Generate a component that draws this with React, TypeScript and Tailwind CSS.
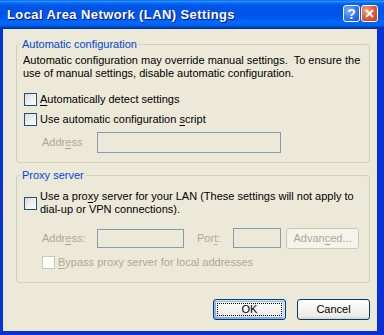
import React from "react";

const font = { fontFamily: '"Liberation Sans", Arial, sans-serif' };

function Check({ disabled = false }: { disabled?: boolean }) {
  return (
    <div
      className={
        disabled
          ? "w-[13px] h-[13px] shrink-0 border border-[#cac8bb] bg-white"
          : "w-[13px] h-[13px] shrink-0 border border-[#1c5180] bg-[linear-gradient(135deg,#dcdcd7_0%,#ffffff_100%)]"
      }
    />
  );
}

function U({ children }: { children: React.ReactNode }) {
  return <span className="underline underline-offset-[2px]">{children}</span>;
}

export default function App() {
  return (
    <div
      className="w-[384px] h-[335px] flex flex-col bg-[#0831d9] text-[11px] leading-[13px] text-black overflow-hidden"
      style={font}
    >
      {/* Title bar */}
      <div className="h-[29px] shrink-0 flex items-center pl-[7px] pr-[6px] bg-[linear-gradient(180deg,#0058ee_0%,#3593ff_4%,#288eff_6%,#127dff_8%,#036ffc_10%,#0262ee_14%,#0057e5_20%,#0054e3_24%,#0055eb_56%,#005bf5_66%,#026afe_76%,#0062ef_86%,#0052d6_92%,#0040ab_94%,#003092_100%)]">
        <div className="flex-1 text-white font-bold text-[13px] leading-[16px] [text-shadow:1px_1px_#0f1089] tracking-[0.4px]">
          Local Area Network (LAN) Settings
        </div>
        <div className="flex gap-[1px] mt-[-2px]">
          <div className="w-[17px] h-[17px] rounded-[3px] border border-white bg-[radial-gradient(circle_at_30%_30%,#7fb1ff_0%,#3a7df4_45%,#1651d6_100%)] flex items-center justify-center text-white font-bold text-[14px] leading-none">
            ?
          </div>
          <div className="w-[17px] h-[17px] rounded-[3px] border border-white bg-[radial-gradient(circle_at_30%_30%,#f5a98a_0%,#e2603a_45%,#c23c12_100%)] flex items-center justify-center">
            <svg width="9" height="9" viewBox="0 0 9 9">
              <path d="M1 1 L8 8 M8 1 L1 8" stroke="white" strokeWidth="2" />
            </svg>
          </div>
        </div>
      </div>

      {/* Client area */}
      <div className="flex-1 ml-[3px] mr-[7px] mb-[4px] bg-[#ece9d8] flex flex-col">
        {/* Group 1 */}
        <div className="relative ml-[13px] mt-[15px] w-[354px] border border-[#d0d0bf] rounded-[3px] pl-[6px] pt-[9px] pb-[9px]">
          <div className="absolute left-[3px] top-[-7px] px-[2px] bg-[#ece9d8] text-[#0046d5]">
            Automatic configuration
          </div>
          <div>
            Automatic configuration may override manual settings.&nbsp; To ensure the
            <br />
            use of manual settings, disable automatic configuration.
          </div>
          <div className="mt-[13px] flex items-center h-[13px] gap-[3px] pl-[1px]">
            <Check />
            <span>
              <U>A</U>utomatically detect settings
            </span>
          </div>
          <div className="mt-[7px] flex items-center h-[13px] gap-[3px] pl-[1px]">
            <Check />
            <span>
              Use automatic configuration <U>s</U>cript
            </span>
          </div>
          <div className="mt-[6px] flex items-center h-[21px]">
            <span className="w-[74px] shrink-0 pl-[19px] text-[#aca899]">
              Addr<U>e</U>ss
            </span>
            <div className="w-[184px] h-[21px] border border-[#7f9db9] bg-[#ece9d8]" />
          </div>
        </div>

        {/* Group 2 */}
        <div className="relative ml-[13px] mt-[12px] w-[354px] border border-[#d0d0bf] rounded-[3px] pl-[6px] pt-[14px] pb-[13px]">
          <div className="absolute left-[3px] top-[-7px] px-[2px] bg-[#ece9d8] text-[#0046d5]">
            Proxy server
          </div>
          <div className="flex items-center gap-[3px] pl-[1px]">
            <Check />
            <span>
              Use a pro<U>x</U>y server for your LAN (These settings will not apply to
              <br />
              dial-up or VPN connections).
            </span>
          </div>
          <div className="mt-[11px] flex items-center h-[22px] text-[#aca899]">
            <span className="w-[74px] shrink-0 pl-[19px]">
              Addr<U>e</U>ss:
            </span>
            <div className="w-[87px] h-[19px] shrink-0 border border-[#7f9db9] bg-[#ece9d8]" />
            <span className="ml-[13px] w-[36px] shrink-0">
              Por<U>t</U>:
            </span>
            <div className="w-[48px] h-[20px] shrink-0 border border-[#7f9db9] bg-[#ece9d8]" />
            <div className="ml-[5px] w-[73px] h-[21px] shrink-0 rounded-[3px] border border-[#c9c7ba] bg-[#f5f4ea] flex items-center justify-center">
              Advan<U>c</U>ed...
            </div>
          </div>
          <div className="mt-[7px] flex items-center h-[13px] gap-[3px] pl-[19px] text-[#aca899]">
            <Check disabled />
            <span>
              <U>B</U>ypass proxy server for local addresses
            </span>
          </div>
        </div>

        {/* Buttons */}
        <div className="mt-[16px] flex justify-end gap-[11px] pr-[7px]">
          <div className="relative w-[73px] h-[21px] rounded-[3px] border border-[#003c74] bg-[linear-gradient(180deg,#ffffff_0%,#ecebe6_86%,#d6d0c5_100%)] shadow-[inset_-1px_1px_#cee7ff,inset_1px_2px_#98b8ea,inset_-2px_2px_#bcd4f6,inset_1px_-1px_#89ade4,inset_2px_-2px_#89ade4] flex items-center justify-center">
            <div className="absolute inset-[3px] border border-dotted border-[#000]" />
            OK
          </div>
          <div className="w-[73px] h-[21px] rounded-[3px] border border-[#003c74] bg-[linear-gradient(180deg,#ffffff_0%,#ecebe6_86%,#d6d0c5_100%)] flex items-center justify-center">
            Cancel
          </div>
        </div>
      </div>
    </div>
  );
}
